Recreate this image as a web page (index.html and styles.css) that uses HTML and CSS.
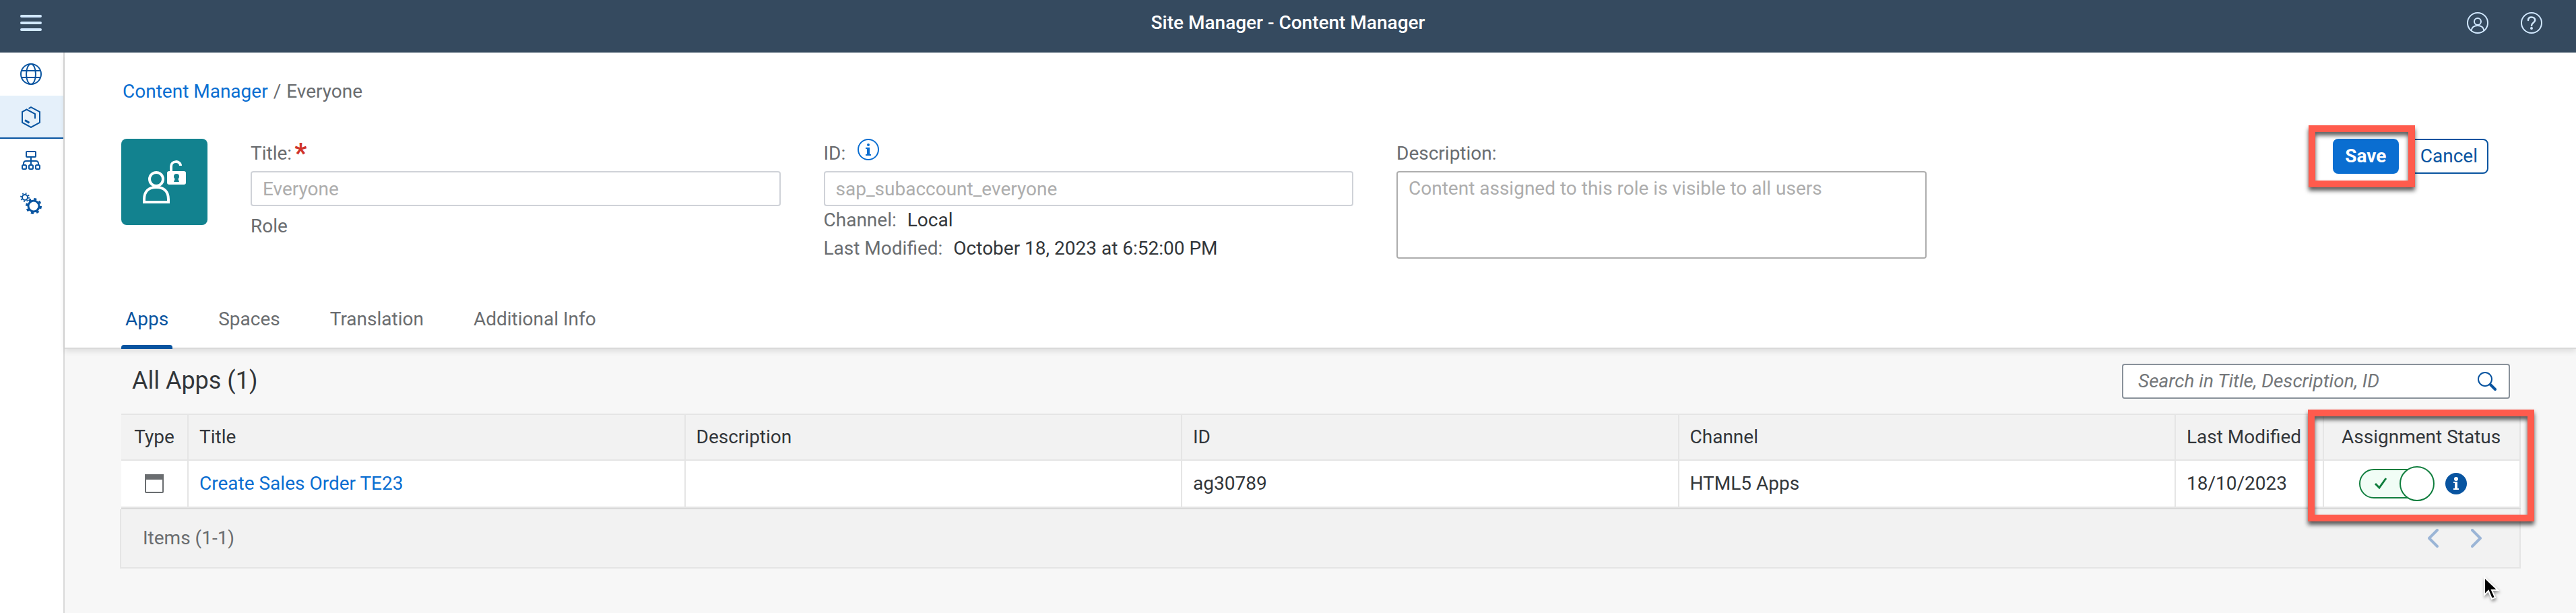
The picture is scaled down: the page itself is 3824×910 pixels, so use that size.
FILE: index.html
```html
<!DOCTYPE html>
<html lang="en">
<head>
<meta charset="utf-8">
<title>Site Manager - Content Manager</title>
<link rel="stylesheet" href="styles.css">
</head>
<body>
<header class="shell">
  <button class="icon-button shell-menu" aria-label="Menu">
    <svg width="32" height="32" viewBox="0 0 32 32" fill="none" stroke="currentColor" stroke-width="4" stroke-linecap="round"><path d="M2 6h28M2 16h28M2 26h28"/></svg>
  </button>
  <h1 class="shell-title">Site Manager - Content Manager</h1>
  <div class="shell-actions">
    <button class="icon-button" aria-label="Profile">
      <svg width="32" height="32" viewBox="0 0 32 32" fill="none" stroke="currentColor" stroke-width="2"><circle cx="16" cy="16" r="15"/><circle cx="16" cy="14" r="5"/><path d="M7 27.500c0-5 4-7.500 9-7.500s9 2.500 9 7.500"/></svg>
    </button>
    <button class="icon-button" aria-label="Help">
      <svg width="32" height="32" viewBox="0 0 32 32" fill="none" stroke="currentColor" stroke-width="2"><circle cx="16" cy="16" r="15"/><path d="M11 12c0-3 2-4.500 5-4.500s5.200 1.800 5.200 4.500c0 4-5.200 3.500-5.200 8" stroke-width="2.500" stroke-linecap="round"/><circle cx="16" cy="24" r="2" fill="currentColor" stroke="none"/></svg>
    </button>
  </div>
</header>
<div class="layout">
  <nav class="side" aria-label="Main">
    <a class="side-item" href="#" aria-label="Sites">
      <svg width="32" height="32" viewBox="0 0 32 32" fill="none" stroke="currentColor" stroke-width="2"><circle cx="16" cy="16" r="15"/><ellipse cx="16" cy="16" rx="7" ry="15"/><path d="M2 11h28M2 21h28"/></svg>
    </a>
    <a class="side-item side-item-active" href="#" aria-label="Content">
      <svg width="32" height="32" viewBox="0 0 32 32" fill="none" stroke="currentColor" stroke-width="2"><path d="M12.500 3.200 16 1.200l13 6.800v16l-13 7-13-7V8l6.500-3.500L22 11v7"/><path d="m7 20.500 6.500 3.800" stroke-width="3"/></svg>
    </a>
    <a class="side-item" href="#" aria-label="Hierarchy">
      <svg width="32" height="32" viewBox="0 0 32 32" fill="none" stroke="currentColor" stroke-width="2"><rect x="9" y="3" width="14" height="8" rx="1"/><rect x="3" y="23" width="6" height="6" rx="1.500"/><rect x="13" y="23" width="6" height="6" rx="1.500"/><rect x="23" y="23" width="6" height="6" rx="1.500"/><path d="M16 11v12M5 23v-2q0-4 4-4h14q4 0 4 4v2"/></svg>
    </a>
    <a class="side-item" href="#" aria-label="Settings">
      <svg width="32" height="32" viewBox="0 0 32 32" fill="none" stroke="currentColor"><circle cx="7" cy="7" r="4" stroke-width="2"/><circle cx="7" cy="7" r="6" stroke-width="2" stroke-dasharray="1.800 2.912"/><circle cx="20" cy="20" r="8" stroke-width="3"/><circle cx="20" cy="20" r="10.500" stroke-width="3" stroke-dasharray="4 4.247"/></svg>
    </a>
  </nav>
  <main class="page">
    <section class="page-header">
      <nav class="breadcrumb" aria-label="Breadcrumb"><a class="link" href="#">Content Manager</a><span>/</span><span>Everyone</span></nav>
      <div class="details">
        <div class="avatar">
          <svg width="64" height="80" viewBox="0 0 64 80" fill="none" stroke="#fff" stroke-width="4"><circle cx="20" cy="36" r="10"/><path d="M2 70v-4c0-12 7-18 18-18s18 6 18 18v4z"/><path d="M42 26v-9c0-9 14-9 14-1"/><rect x="36" y="24" width="28" height="20" rx="3" fill="#fff" stroke="none"/><circle cx="50" cy="32" r="4" fill="#12828f" stroke="none"/><path d="M49 32h2l3 8h-8z" fill="#12828f" stroke="none"/></svg>
        </div>
        <div class="field">
          <label class="label" for="title">Title:<span class="required">*</span></label>
          <input class="input" id="title" type="text" value="Everyone" readonly>
          <p class="kind">Role</p>
        </div>
        <div class="field">
          <div class="label"><label for="ident">ID:</label>
            <svg class="label-icon" width="32" height="32" viewBox="0 0 32 32"><circle cx="16" cy="16" r="15" fill="none" stroke="currentColor" stroke-width="2"/><circle cx="16" cy="9" r="2" fill="currentColor"/><path d="M12 13h6v10h2v2h-8v-2h2v-8h-2z" fill="currentColor"/></svg>
          </div>
          <input class="input" id="ident" type="text" value="sap_subaccount_everyone" readonly>
          <dl class="meta">
            <div class="meta-row"><dt>Channel:</dt><dd>Local</dd></div>
            <div class="meta-row"><dt>Last Modified:</dt><dd>October 18, 2023 at 6:52:00 PM</dd></div>
          </dl>
        </div>
        <div class="field">
          <label class="label" for="description">Description:</label>
          <textarea class="input textarea" id="description" readonly>Content assigned to this role is visible to all users</textarea>
        </div>
        <div class="actions">
          <div class="save-wrap">
            <button class="button button-primary">Save</button>
            <span class="callout callout-save"></span>
          </div>
          <button class="button">Cancel</button>
        </div>
      </div>
      <nav class="tabs" aria-label="Sections">
        <a class="tab tab-active" href="#">Apps</a>
        <a class="tab" href="#">Spaces</a>
        <a class="tab" href="#">Translation</a>
        <a class="tab" href="#">Additional Info</a>
      </nav>
    </section>
    <section class="apps">
      <div class="toolbar">
        <h2 class="toolbar-title">All Apps (1)</h2>
        <div class="search">
          <input class="search-input" type="search" placeholder="Search in Title, Description, ID" aria-label="Search in Title, Description, ID">
          <button class="icon-button search-button" aria-label="Search">
            <svg width="28" height="28" viewBox="0 0 28 28" fill="none" stroke="currentColor"><circle cx="11" cy="11" r="10" stroke-width="2"/><path d="m19 19 7 7" stroke-width="4" stroke-linecap="round"/></svg>
          </button>
        </div>
      </div>
      <div class="table-wrap">
        <table class="table">
          <colgroup><col class="col-type"><col><col><col><col><col class="col-date"><col class="col-status"></colgroup>
          <thead>
            <tr><th class="cell-type">Type</th><th>Title</th><th>Description</th><th>ID</th><th>Channel</th><th>Last Modified</th><th class="cell-status">Assignment Status</th></tr>
          </thead>
          <tbody>
            <tr>
              <td class="cell-type"><svg class="app-icon" width="28" height="28" viewBox="0 0 28 28"><rect x="1" y="1" width="26" height="26" rx="1" fill="none" stroke="currentColor" stroke-width="2"/><path d="M0 0h28v8H0z" fill="currentColor"/></svg></td>
              <td><a class="link" href="#">Create Sales Order TE23</a></td>
              <td></td>
              <td>ag30789</td>
              <td>HTML5 Apps</td>
              <td>18/10/2023</td>
              <td>
                <div class="status">
                  <label class="switch"><input class="switch-input" type="checkbox" checked aria-label="Assignment status"><span class="switch-track"><svg width="20" height="20" viewBox="0 0 20 20" fill="none" stroke="currentColor" stroke-width="3"><path d="m2 10 6 6L18 2"/></svg></span><span class="switch-thumb"></span></label>
                  <svg class="status-info" width="32" height="32" viewBox="0 0 32 32"><circle cx="16" cy="16" r="16" fill="currentColor"/><circle cx="16" cy="9" r="3" fill="#fff"/><path d="M12 13h6v10h2v2h-8v-2h2v-8h-2z" fill="#fff"/></svg>
                </div>
              </td>
            </tr>
          </tbody>
        </table>
        <span class="callout callout-status"></span>
      </div>
      <div class="pager">
        <span>Items (1-1)</span>
        <div class="pager-buttons">
          <button class="icon-button pager-button" aria-label="Previous"><svg width="16" height="28" viewBox="0 0 16 28" fill="none" stroke="currentColor" stroke-width="4" stroke-linecap="round" stroke-linejoin="round"><path d="M14 2 2 14l12 12"/></svg></button>
          <button class="icon-button pager-button" aria-label="Next"><svg width="16" height="28" viewBox="0 0 16 28" fill="none" stroke="currentColor" stroke-width="4" stroke-linecap="round" stroke-linejoin="round"><path d="m2 2 12 12L2 26"/></svg></button>
        </div>
      </div>
      <svg class="cursor" width="24" height="36" viewBox="0 0 24 36"><path d="M2 2v26l6-6 5 12 5-2-5-11h9z" fill="#000" stroke="#fff" stroke-width="2"/></svg>
    </section>
  </main>
</div>
</body>
</html>
```
FILE: styles.css
```css
* { box-sizing: border-box; }

body {
  margin: 0;
  min-height: 100vh;
  display: flex;
  flex-direction: column;
  background: #f7f7f7;
  color: #32363a;
  font-family: Roboto, "Liberation Sans", sans-serif;
  font-size: 28px;
  line-height: 40px;
}

h1, h2, p, dl, dd { margin: 0; }

a { text-decoration: none; }

button, input, textarea { font: inherit; }

svg { display: block; }

.link { color: #0a6ed1; }

.icon-button {
  display: flex;
  padding: 0;
  border: 0;
  background: none;
  color: inherit;
}

.shell {
  display: grid;
  grid-template-columns: 1fr auto 1fr;
  align-items: center;
  height: 78px;
  padding: 0 30px 10px;
  background: #354a5f;
  color: #d1e8ff;
}

.shell-title {
  color: #fff;
  font-size: 28px;
  font-weight: 500;
}

.shell-actions {
  display: flex;
  justify-content: flex-end;
  gap: 48px;
  padding-right: 20px;
}

.layout {
  flex: 1;
  display: flex;
}

.side {
  flex: none;
  width: 96px;
  border-right: 2px solid #d9d9d9;
  background: #fff;
}

.side-item {
  display: flex;
  align-items: center;
  height: 64px;
  padding-left: 30px;
  color: #0854a0;
}

.side-item-active {
  border-top: 2px solid #e5f0fa;
  border-bottom: 2px solid #0854a0;
  background: #e5f0fa;
}

.page {
  flex: 1;
  min-width: 0;
}

.page-header {
  position: relative;
  padding-top: 38px;
  border-bottom: 2px solid #d9d9d9;
  background: #fff;
  box-shadow: 0 4px 8px rgba(0, 0, 0, 0.1);
}

.breadcrumb {
  display: flex;
  gap: 8px;
  padding: 0 86px;
  color: #6a6d70;
}

.details {
  display: grid;
  grid-template-columns: 128px repeat(4, minmax(0, 1fr));
  column-gap: 64px;
  min-height: 222px;
  margin-top: 50px;
  padding: 0 114px 0 84px;
}

.avatar {
  display: flex;
  align-items: center;
  justify-content: center;
  height: 128px;
  border-radius: 8px;
  background: #12828f;
}

.field {
  display: flex;
  flex-direction: column;
}

.label {
  display: flex;
  height: 48px;
  gap: 18px;
  color: #6a6d70;
  line-height: 44px;
}

.label-icon { color: #0a6ed1; }

.required {
  margin-left: -14px;
  color: #d0342c;
  font-size: 40px;
  font-weight: 700;
}

.input {
  width: 100%;
  height: 52px;
  padding: 4px 16px;
  border: 2px solid #cfd2d8;
  border-radius: 4px;
  outline: 0;
  background: #fff;
  color: #adadad;
}

.textarea {
  height: 130px;
  border-color: #adadad;
  resize: none;
}

.kind {
  margin-top: 10px;
  color: #6a6d70;
}

.meta-row {
  display: flex;
  gap: 16px;
  height: 42px;
  line-height: 42px;
}

.meta-row dt { color: #6a6d70; }

.actions {
  display: flex;
  justify-content: flex-end;
  align-items: flex-start;
  gap: 16px;
  padding-right: 16px;
}

.save-wrap { position: relative; }

.button {
  min-width: 98px;
  height: 52px;
  padding: 0 14px;
  border: 2px solid #0854a0;
  border-radius: 8px;
  background: #fff;
  color: #0854a0;
}

.button-primary {
  border-color: #0a6ed1;
  background: #0a6ed1;
  color: #fff;
  font-weight: 700;
}

.callout {
  position: absolute;
  z-index: 2;
  border: 10px solid #ff5b4d;
  filter: drop-shadow(0 5px 3px rgba(0, 0, 0, 0.65));
  pointer-events: none;
}

.callout-save { inset: -20px -24px -20px -36px; }

.callout-status {
  top: -6px;
  right: -20px;
  bottom: -18px;
  width: 336px;
}

.tabs {
  display: flex;
  gap: 62px;
  height: 88px;
  padding: 0 84px;
}

.tab {
  height: 88px;
  padding: 26px 6px 0;
  color: #6a6d70;
}

.tab-active {
  position: relative;
  color: #0854a0;
}

.tab-active::after {
  content: "";
  position: absolute;
  left: 0;
  right: 0;
  bottom: -2px;
  height: 6px;
  border-radius: 4px 4px 0 0;
  background: #0854a0;
}

.apps {
  position: relative;
  padding: 22px 82px 0 84px;
}

.toolbar {
  display: flex;
  justify-content: space-between;
  height: 74px;
  padding: 0 16px;
}

.toolbar-title {
  font-size: 36px;
  font-weight: 400;
  line-height: 50px;
}

.search {
  display: flex;
  align-items: center;
  width: 576px;
  height: 52px;
  padding: 0 18px 0 22px;
  border: 2px solid #89919a;
  border-radius: 4px;
  background: #fff;
}

.search-input {
  flex: 1;
  min-width: 0;
  padding: 0;
  border: 0;
  outline: 0;
  background: none;
}

.search-input::placeholder {
  color: #74777a;
  font-style: italic;
  opacity: 1;
}

.search-button { color: #0854a0; }

.table-wrap { position: relative; }

.table {
  width: 100%;
  table-layout: fixed;
  border-collapse: separate;
  border-spacing: 0;
  border-top: 2px solid #e5e5e5;
  border-bottom: 2px solid #d9d9d9;
}

.col-type { width: 100px; }
.col-date { width: 220px; }
.col-status { width: 292px; }

.table th,
.table td {
  height: 70px;
  padding: 0 16px;
  border-right: 2px solid #e5e5e5;
  border-bottom: 2px solid #e5e5e5;
  text-align: left;
  font-weight: 400;
  white-space: nowrap;
}

.table th {
  height: 68px;
  background: #f2f2f2;
}

.table td { background: #fff; }

.table .cell-type { text-align: center; }

.table .cell-status { padding-left: 26px; }

.app-icon {
  margin: 0 auto;
  color: #6a6d70;
}

.status {
  display: flex;
  align-items: center;
  gap: 16px;
  padding-left: 36px;
}

.switch {
  position: relative;
  display: flex;
  align-items: center;
  width: 112px;
  height: 52px;
}

.switch-input {
  position: absolute;
  inset: 0;
  margin: 0;
  opacity: 0;
}

.switch-track {
  display: flex;
  align-items: center;
  width: 104px;
  height: 44px;
  padding-left: 20px;
  border: 2px solid #107e3e;
  border-radius: 22px;
  background: #f1fdf6;
  color: #107e3e;
}

.switch-thumb {
  position: absolute;
  right: 0;
  width: 52px;
  height: 52px;
  border: 2px solid #107e3e;
  border-radius: 50%;
  background: #fff;
}

.status-info { color: #0854a0; }

.pager {
  display: flex;
  align-items: center;
  justify-content: space-between;
  height: 88px;
  margin-left: -2px;
  padding: 0 56px 0 32px;
  border: 2px solid #e5e5e5;
  border-top: 0;
  background: #f2f2f2;
  color: #6a6d70;
}

.pager-buttons {
  display: flex;
  gap: 48px;
}

.pager-button { color: #9bb5d6; }

.cursor {
  position: absolute;
  top: 337px;
  right: 114px;
  filter: drop-shadow(1px 3px 2px rgba(0, 0, 0, 0.4));
}
```
